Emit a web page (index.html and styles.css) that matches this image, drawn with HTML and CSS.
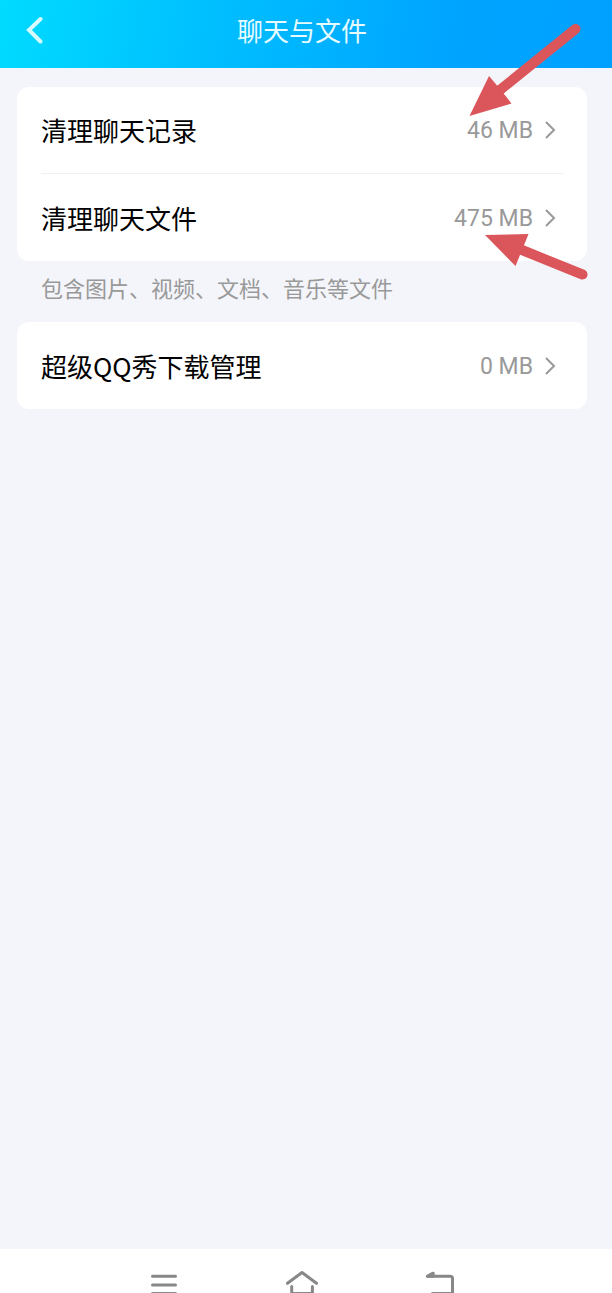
FILE: index.html
```html
<!DOCTYPE html>
<html lang="zh-CN">
<head>
    <meta charset="UTF-8">
    <meta name="viewport" content="width=device-width, initial-scale=1.0">
    <title>聊天与文件</title>
    <link rel="stylesheet" href="styles.css">
</head>
<body>
    <header class="header">
        <button class="back-btn" aria-label="返回">
            <svg width="18" height="28" viewBox="0 0 18 28">
                <path d="M15.500 3 L4 14 L15.500 25.500" />
            </svg>
        </button>
        <h1 class="title">聊天与文件</h1>
    </header>

    <main class="content">
        <ul class="card">
            <li class="item">
                <button class="row">
                    <span class="label">清理聊天记录</span>
                    <span class="value">46 MB</span>
                    <svg class="chevron" width="12" height="18" viewBox="0 0 12 18">
                        <path d="M2 1 L10 9 L2 17" />
                    </svg>
                </button>
            </li>
            <li class="item">
                <button class="row">
                    <span class="label">清理聊天文件</span>
                    <span class="value">475 MB</span>
                    <svg class="chevron" width="12" height="18" viewBox="0 0 12 18">
                        <path d="M2 1 L10 9 L2 17" />
                    </svg>
                </button>
            </li>
        </ul>
        <p class="note">包含图片、视频、文档、音乐等文件</p>

        <ul class="card">
            <li class="item">
                <button class="row">
                    <span class="label">超级QQ秀下载管理</span>
                    <span class="value">0 MB</span>
                    <svg class="chevron" width="12" height="18" viewBox="0 0 12 18">
                        <path d="M2 1 L10 9 L2 17" />
                    </svg>
                </button>
            </li>
        </ul>
    </main>

    <nav class="navbar">
        <button class="nav-btn" aria-label="菜单">
            <svg width="34" height="34" viewBox="0 0 34 34">
                <path d="M5.500 8.300 H28.500 M5.500 16.900 H28.500 M5.500 25.500 H28.500" />
            </svg>
        </button>
        <button class="nav-btn" aria-label="主页">
            <svg width="34" height="34" viewBox="0 0 34 34">
                <path d="M2.500 15.300 L17 4.500 L31.500 15.300 M6.700 18.500 V25.500 H27.400 V18.500" />
            </svg>
        </button>
        <button class="nav-btn" aria-label="返回上一级">
            <svg width="34" height="34" viewBox="0 0 34 34">
                <path d="M10 5.300 L4.500 8.300 H27 Q29.500 8.300 29.500 10.500 V25.500 H9.500" />
                <path class="nav-tip" d="M10 5.300 L4.500 8.300 H10 Z" />
            </svg>
        </button>
    </nav>

    <!-- red pointer arrows over the two sizes -->
    <svg class="arrows" width="150" height="300" viewBox="0 0 150 300" aria-hidden="true">
        <path class="shaft" d="M113.500 29 L38 90" />
        <path class="tip" d="M7.500 116 L27 76 L35.500 86 L42 94 L49.500 103.500 Z" />
        <path class="shaft" d="M120.500 274.500 L60 250" />
        <path class="tip" d="M23 235 L66.500 234 L53.500 266 Z" />
    </svg>
</body>
</html>
```

FILE: styles.css
```css
* {
    box-sizing: border-box;
}

body {
    position: relative;
    display: flex;
    flex-direction: column;
    min-height: 100vh;
    margin: 0;
    background-color: #f4f5fa;
    font-family: "Noto Sans CJK SC", sans-serif;
    color: #000;
}

button {
    padding: 0;
    border: none;
    background: none;
    font-family: inherit;
    color: inherit;
    cursor: pointer;
}

svg {
    display: block;
    fill: none;
}

/* Header */
.header {
    display: grid;
    grid-template-columns: 60px 1fr 60px;
    align-items: center;
    height: 68px;
    padding: 0 8px 8px 0;
    background: linear-gradient(100deg, #00dbff 0%, #00c0ff 33%, #00a5ff 72%, #00a0ff 100%);
    color: #e6fbff;
}

.back-btn {
    padding-left: 25px;
}

.back-btn svg {
    stroke: #d5faff;
    stroke-width: 4;
    stroke-linecap: round;
}

.title {
    margin: 0;
    font-size: 26px;
    font-weight: 400;
    line-height: 36px;
    text-align: center;
}

/* Cards */
.content {
    flex: 1;
    padding: 19px 25px 19px 17px;
}

.card {
    margin: 0;
    padding: 0 24px;
    border-radius: 12px;
    background-color: #fff;
    list-style: none;
}

.item {
    height: 87px;
}

.item:not(:last-child) {
    border-bottom: 1px solid #f0f0f2;
}

.row {
    display: flex;
    align-items: center;
    width: 100%;
    height: 100%;
    padding-right: 7px;
}

.label {
    flex: 1;
    font-size: 26px;
    line-height: 36px;
    text-align: left;
}

.value {
    margin-right: 11px;
    padding-top: 2px;
    font-family: Roboto, sans-serif;
    font-size: 23px;
    line-height: 36px;
    color: #999;
}

.chevron {
    stroke: #999;
    stroke-width: 2;
}

.note {
    margin: 0;
    padding: 11px 24px 20px;
    font-size: 22px;
    line-height: 30px;
    color: #999;
}

/* Bottom bar */
.navbar {
    display: flex;
    justify-content: center;
    height: 44px;
    padding: 19px 8px 0 0;
    overflow: hidden;
    background-color: #fff;
}

.nav-btn {
    display: flex;
    justify-content: center;
    width: 138px;
    height: 34px;
}

.nav-btn svg {
    stroke: #888;
    stroke-width: 3;
    stroke-linecap: round;
    stroke-linejoin: round;
}

.nav-tip {
    fill: #888;
}

/* Pointer arrows */
.arrows {
    position: absolute;
    top: 0;
    right: 0;
    pointer-events: none;
}

.shaft {
    stroke: #db565b;
    stroke-width: 10;
    stroke-linecap: round;
}

.tip {
    fill: #db565b;
}
```
